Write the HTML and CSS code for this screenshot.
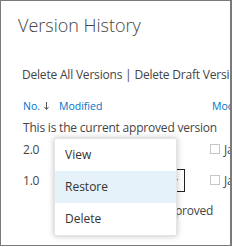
FILE: index.html
```html
<!DOCTYPE html>
<html lang="en">
<head>
    <meta charset="UTF-8">
    <title>Version History</title>
    <link rel="stylesheet" href="styles.css">
</head>
<body>
    <div class="dialog">
        <h1 class="title">Version History</h1>
        <div class="actions">Delete All Versions | Delete Draft Versions</div>

        <div class="versions">
            <div class="row head">
                <span class="col-no">No.<svg class="sort" width="5" height="8" viewBox="0 0 5 8"><path d="M2.5 0 V7 M0.5 5 L2.5 7.5 L4.5 5" stroke="#555" stroke-width="1" fill="none"/></svg></span>
                <span class="col-mod">Modified</span>
                <span class="col-by">Modified By</span>
            </div>
            <div class="note">This is the current approved version</div>
            <div class="row first">
                <span class="col-no">2.0</span>
                <span class="col-mod">1/9/2015 3:12 PM</span>
                <span class="col-by"><i class="check"></i>Jane Doe</span>
            </div>
            <div class="row">
                <span class="col-no">1.0</span>
                <span class="col-mod"><span class="picker">1/8/2015 9:40 AM<b class="caret"></b></span></span>
                <span class="col-by"><i class="check"></i>Jane Doe</span>
            </div>
            <div class="row comment">
                <span class="col-no"></span>
                <span class="col-mod">Comments: Approved</span>
            </div>
        </div>

        <div class="menu">
            <div class="menu-item">View</div>
            <div class="menu-item active">Restore</div>
            <div class="menu-item">Delete</div>
        </div>
    </div>
</body>
</html>
```

FILE: styles.css
```css
* {
    margin: 0;
    padding: 0;
    box-sizing: border-box;
}

body {
    width: 232px;
    height: 247px;
    background: #fff;
    font-family: 'Open Sans', sans-serif;
    color: #444;
    overflow: hidden;
}

.dialog {
    position: relative;
    width: 232px;
    height: 246px;
    border: 1px solid #7a7a7a;
    border-right-width: 2px;
    overflow: hidden;
    padding-left: 17px;
}

.title {
    font-size: 18px;
    font-weight: 300;
    color: #444;
    margin-top: 12px;
    line-height: 24px;
    white-space: nowrap;
}

.actions {
    font-size: 12px;
    letter-spacing: -0.2px;
    margin-top: 30px;
    padding-left: 4px;
    line-height: 16px;
    white-space: nowrap;
}

.versions {
    margin-top: 12px;
    padding-left: 5px;
    font-size: 12px;
    letter-spacing: -0.2px;
    white-space: nowrap;
}

.row {
    display: grid;
    grid-template-columns: 36px 151px 100px;
    align-items: center;
    height: 30px;
}

.row.head {
    height: 22px;
    font-size: 10.5px;
    letter-spacing: 0;
    color: #0072c6;
}

.row.first {
    height: 20px;
    margin-bottom: 6px;
}

.row.comment {
    height: 31px;
}

.sort {
    margin-left: 4px;
}

.note {
    height: 22px;
    line-height: 22px;
}

.col-by {
    display: flex;
    align-items: center;
}

.head .col-by {
    padding-left: 2px;
}

.check {
    width: 10px;
    height: 10px;
    border: 1px solid #c6c6c6;
    margin-right: 4px;
}

.picker {
    position: relative;
    display: block;
    width: 128px;
    height: 23px;
    margin-left: -2px;
    border: 1px solid #222;
    padding-left: 2px;
    line-height: 21px;
}

.caret {
    position: absolute;
    right: 6px;
    top: 9px;
    border-left: 2px solid transparent;
    border-right: 2px solid transparent;
    border-top: 3px solid #222;
}

.comment .col-mod {
    padding-left: 36px;
}

/* Context menu */
.menu {
    position: absolute;
    left: 53px;
    top: 137px;
    width: 123px;
    background: #fff;
    border: 1px solid #e4e4e4;
    box-shadow: 0 0 6px rgba(0, 0, 0, 0.25);
}

.menu-item {
    height: 32px;
    line-height: 32px;
    padding-left: 10px;
    font-size: 12px;
    color: #333;
}

.menu-item.active {
    background: #e6f2fa;
}
```
